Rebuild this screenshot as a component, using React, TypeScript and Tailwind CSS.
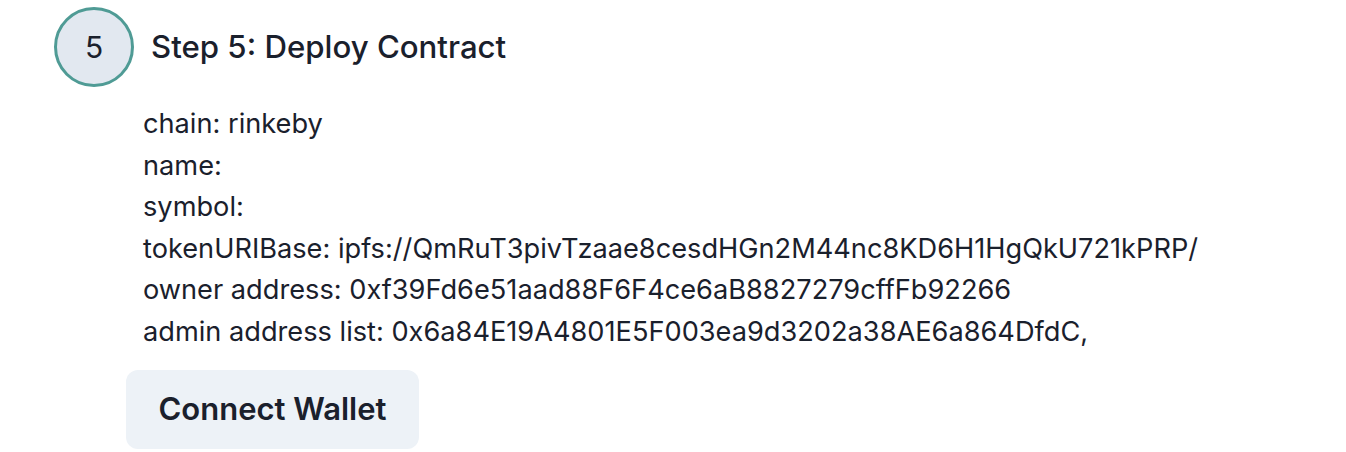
export default function App() {
  const rows = [
    'chain: rinkeby',
    'name:',
    'symbol:',
    'tokenURIBase: ipfs://QmRuT3pivTzaae8cesdHGn2M44nc8KD6H1HgQkU721kPRP/',
    'owner address: 0xf39Fd6e51aad88F6F4ce6aB8827279cffFb92266',
    'admin address list: 0x6a84E19A4801E5F003ea9d3202a38AE6a864DfdC,',
  ]

  return (
    <div className="min-h-screen bg-white text-[#1a202c] font-['Inter',sans-serif]">
      <div className="pt-[7px] pl-[54px]">
        <div className="flex items-center gap-[17px]">
          <div className="w-[80px] h-[80px] rounded-full border-[3px] border-[#4f9b95] bg-[#e2e8f0] flex items-center justify-center text-[30px]">
            5
          </div>
          <h2 className="text-[31.2px] font-medium">Step 5: Deploy Contract</h2>
        </div>
      </div>

      <div className="ml-[126px] mt-[16px]">
        <div className="pl-[17px] text-[27.2px] leading-[41.5px]">
          {rows.map((row) => (
            <div key={row}>{row}</div>
          ))}
        </div>
        <button
          type="button"
          className="mt-[18px] h-[79px] w-[293px] rounded-[12px] bg-[#edf2f7] text-[31px] font-semibold"
        >
          Connect Wallet
        </button>
      </div>
    </div>
  )
}
